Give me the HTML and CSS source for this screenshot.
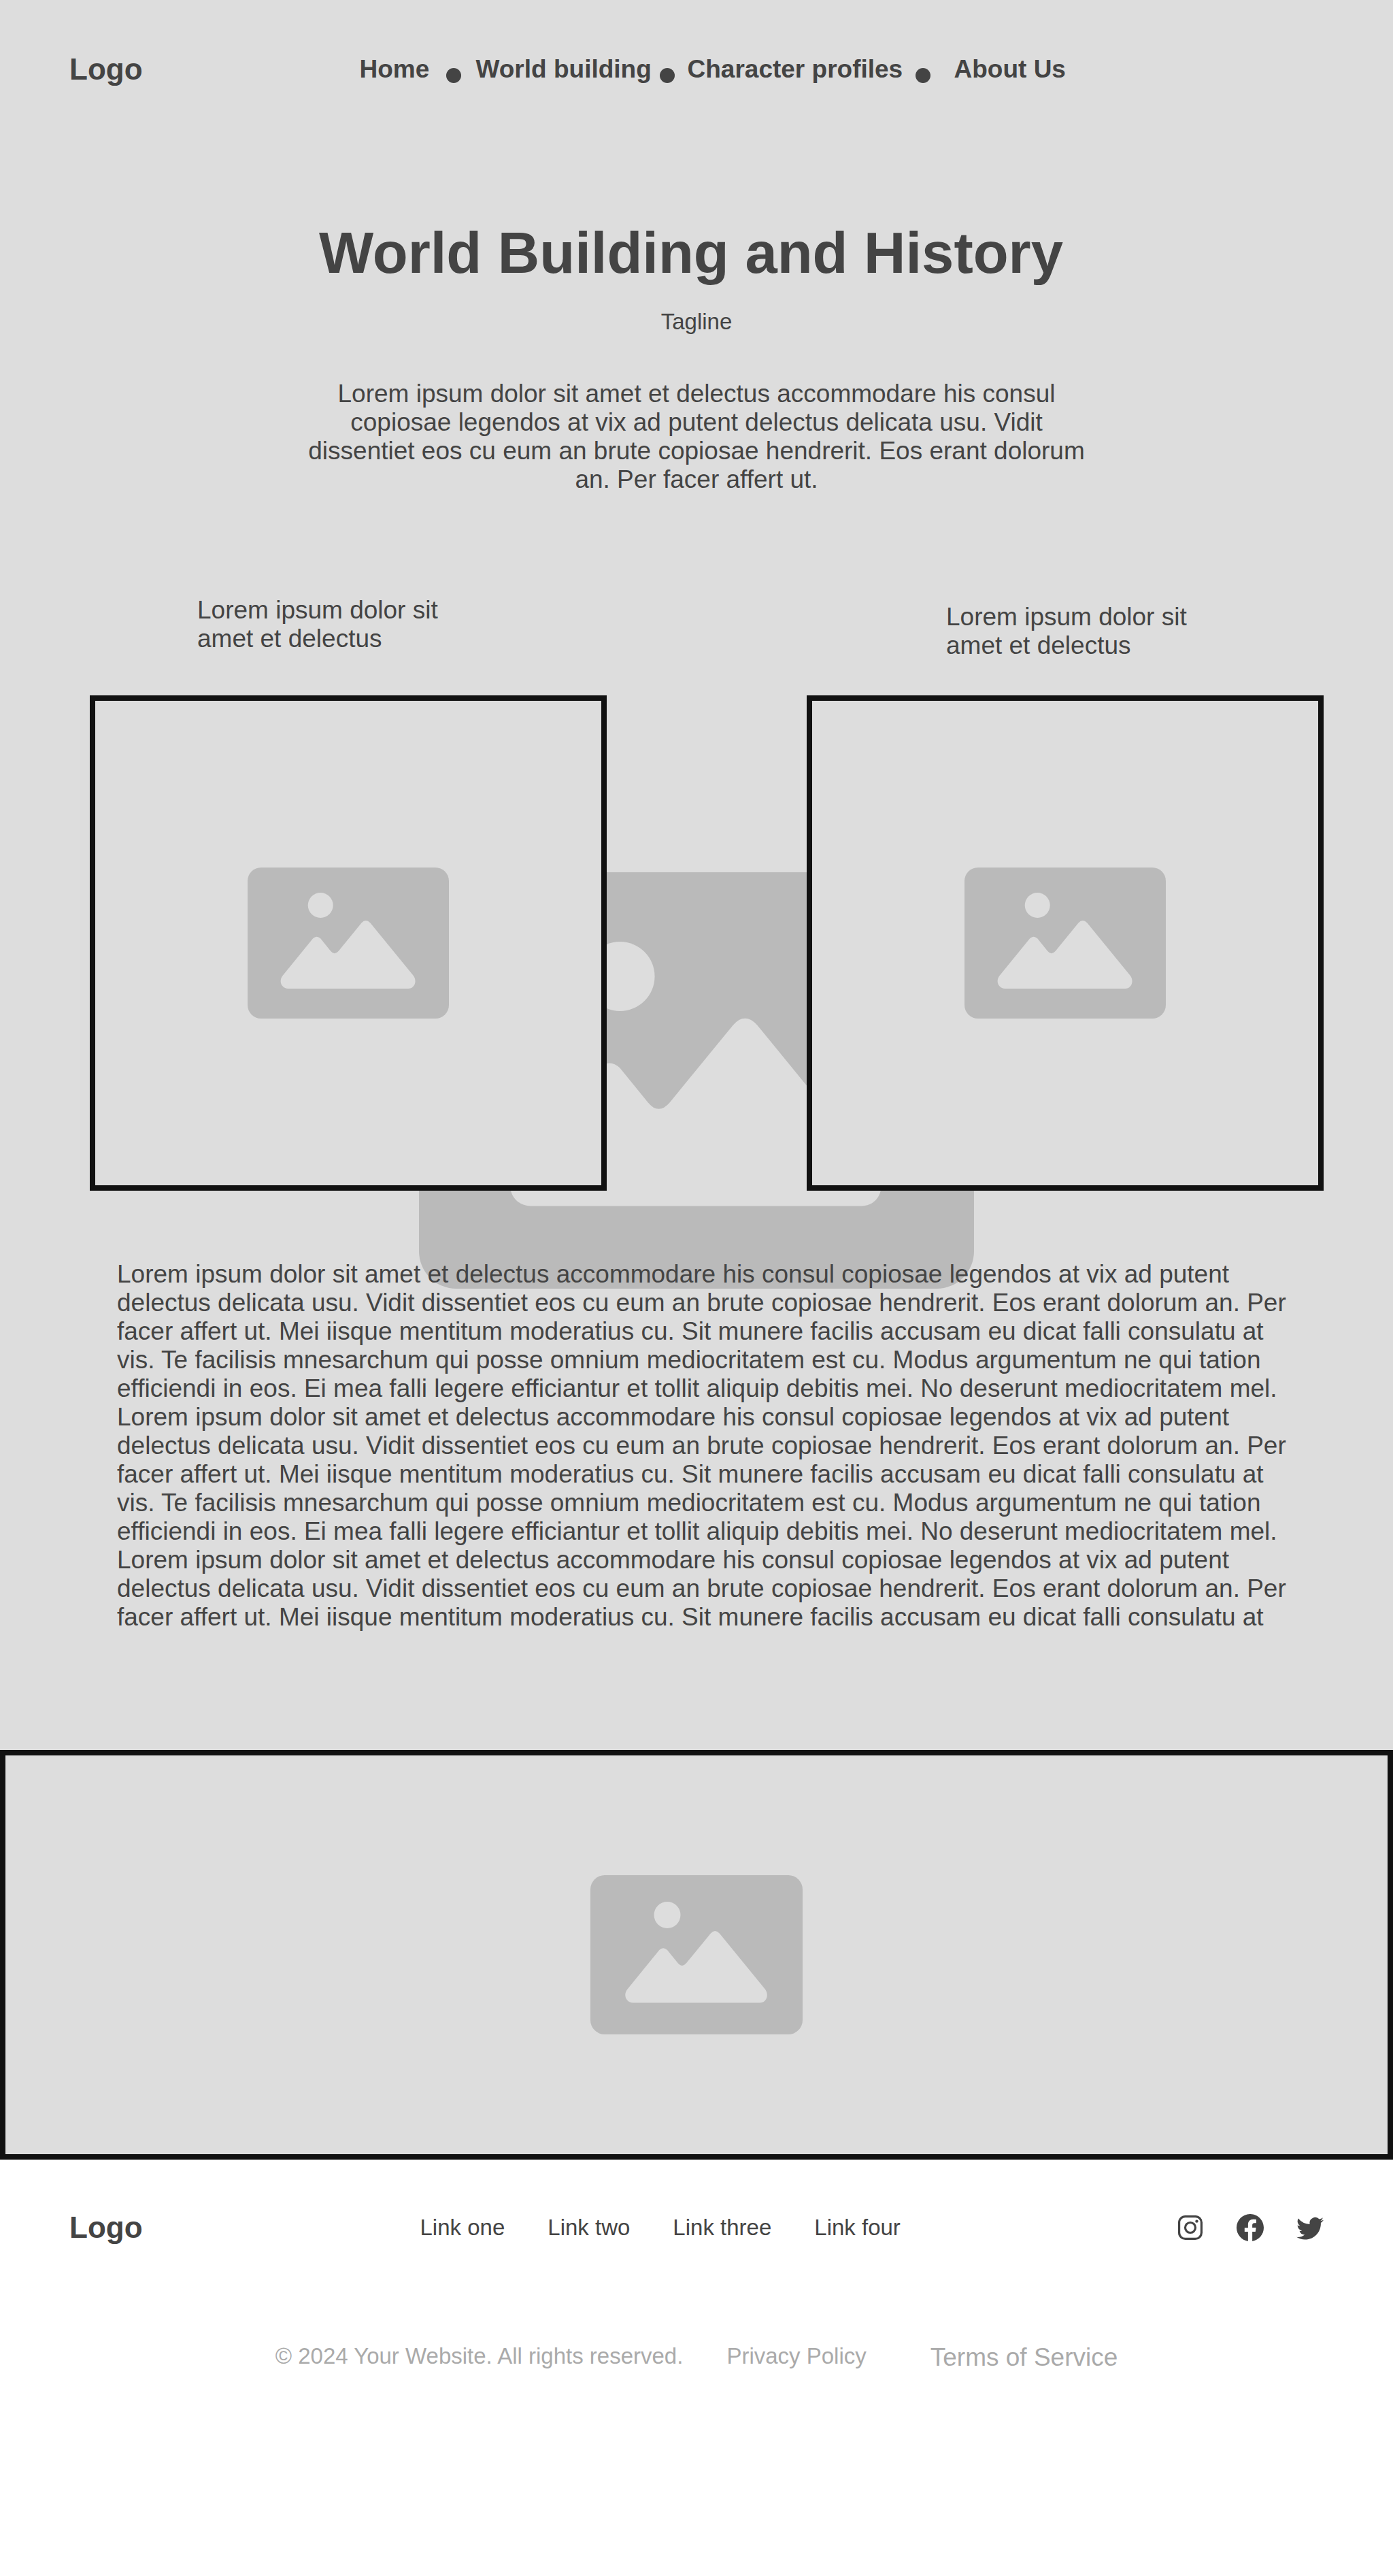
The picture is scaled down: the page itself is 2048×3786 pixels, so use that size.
FILE: index.html
```html
<!DOCTYPE html>
<html lang="en">
<head>
  <meta charset="utf-8">
  <meta name="viewport" content="width=device-width, initial-scale=1">
  <title>World Building and History</title>
  <link rel="stylesheet" href="styles.css">
</head>
<body>
  <svg class="sprite" aria-hidden="true">
    <symbol id="picture" viewBox="0 0 312 234">
      <rect class="picture-frame" width="312" height="234" rx="21"/>
      <circle class="picture-cutout" cx="113" cy="58.5" r="19.5"/>
      <path class="picture-cutout" d="M54.3 167.7 101.3 110Q107 104.500 113 110L128.700 129.300Q134.700 136.700 141 129.300L176.700 85.700Q183.200 78.500 190 85.700L257 167.700C263.500 177 258 187.500 249 187.500H62.700C53 187.500 47.500 176.500 54.300 167.700Z"/>
    </symbol>
  </svg>

  <div class="page-top">
    <svg class="backdrop" viewBox="0 0 312 234" aria-hidden="true"><use href="#picture"/></svg>

    <header class="header">
      <a class="logo" href="#">Logo</a>
      <nav class="nav" aria-label="Main">
        <a href="#">Home</a>
        <span class="dot"></span>
        <a href="#">World building</a>
        <span class="dot"></span>
        <a href="#">Character profiles</a>
        <span class="dot"></span>
        <a href="#">About Us</a>
      </nav>
    </header>

    <main>
      <section class="intro">
        <h1>World Building and History</h1>
        <p class="tagline">Tagline</p>
        <p class="lead">Lorem ipsum dolor sit amet et delectus accommodare his consul copiosae legendos at vix ad putent delectus delicata usu. Vidit dissentiet eos cu eum an brute copiosae hendrerit. Eos erant dolorum an. Per facer affert ut.</p>
      </section>

      <section class="gallery">
        <figure class="card">
          <figcaption>Lorem ipsum dolor sit amet et delectus</figcaption>
          <div class="frame"><svg class="picture" viewBox="0 0 312 234" role="img" aria-label="Image"><use href="#picture"/></svg></div>
        </figure>
        <figure class="card card-right">
          <figcaption>Lorem ipsum dolor sit amet et delectus</figcaption>
          <div class="frame"><svg class="picture" viewBox="0 0 312 234" role="img" aria-label="Image"><use href="#picture"/></svg></div>
        </figure>
      </section>

      <p class="story">Lorem ipsum dolor sit amet et delectus accommodare his consul copiosae legendos at vix ad putent delectus delicata usu. Vidit dissentiet eos cu eum an brute copiosae hendrerit. Eos erant dolorum an. Per facer affert ut. Mei iisque mentitum moderatius cu. Sit munere facilis accusam eu dicat falli consulatu at vis. Te facilisis mnesarchum qui posse omnium mediocritatem est cu. Modus argumentum ne qui tation efficiendi in eos. Ei mea falli legere efficiantur et tollit aliquip debitis mei. No deserunt mediocritatem mel. Lorem ipsum dolor sit amet et delectus accommodare his consul copiosae legendos at vix ad putent delectus delicata usu. Vidit dissentiet eos cu eum an brute copiosae hendrerit. Eos erant dolorum an. Per facer affert ut. Mei iisque mentitum moderatius cu. Sit munere facilis accusam eu dicat falli consulatu at vis. Te facilisis mnesarchum qui posse omnium mediocritatem est cu. Modus argumentum ne qui tation efficiendi in eos. Ei mea falli legere efficiantur et tollit aliquip debitis mei. No deserunt mediocritatem mel. Lorem ipsum dolor sit amet et delectus accommodare his consul copiosae legendos at vix ad putent delectus delicata usu. Vidit dissentiet eos cu eum an brute copiosae hendrerit. Eos erant dolorum an. Per facer affert ut. Mei iisque mentitum moderatius cu. Sit munere facilis accusam eu dicat falli consulatu at</p>
    </main>
  </div>

  <div class="frame banner"><svg class="picture picture-wide" viewBox="0 0 312 234" role="img" aria-label="Image"><use href="#picture"/></svg></div>

  <footer class="footer">
    <div class="footer-row">
      <a class="logo" href="#">Logo</a>
      <nav class="footer-links" aria-label="Footer">
        <a href="#">Link one</a>
        <a href="#">Link two</a>
        <a href="#">Link three</a>
        <a href="#">Link four</a>
      </nav>
      <div class="social">
        <a href="#" aria-label="Instagram">
          <svg viewBox="0 0 40 40"><g fill="none" stroke="currentColor" stroke-width="3.200"><rect x="3.600" y="3.600" width="32.800" height="32.800" rx="9"/><circle cx="20" cy="20" r="7.500"/></g><circle cx="29.500" cy="10.600" r="2.200" fill="currentColor"/></svg>
        </a>
        <a href="#" aria-label="Facebook">
          <svg viewBox="0 0 16 16"><path fill="currentColor" d="M16 8.049c0-4.446-3.582-8.050-8-8.050C3.580 0-.002 3.603-.002 8.050c0 4.017 2.926 7.347 6.750 7.951v-5.625h-2.030V8.050H6.750V6.275c0-2.017 1.195-3.131 3.022-3.131.876 0 1.791.157 1.791.157v1.980h-1.009c-.993 0-1.303.621-1.303 1.258v1.510h2.218l-.354 2.326H9.250V16c3.824-.604 6.750-3.934 6.750-7.951"/></svg>
        </a>
        <a href="#" aria-label="Twitter">
          <svg viewBox="0 0 16 16"><path fill="currentColor" d="M5.026 15c6.038 0 9.341-5.003 9.341-9.334q.002-.211-.006-.422A6.700 6.700 0 0 0 16 3.542a6.700 6.700 0 0 1-1.889.518 3.300 3.300 0 0 0 1.447-1.817 6.500 6.500 0 0 1-2.087.793A3.286 3.286 0 0 0 7.875 6.030a9.320 9.320 0 0 1-6.767-3.429 3.290 3.290 0 0 0 1.018 4.382A3.300 3.300 0 0 1 .640 6.575v.045a3.290 3.290 0 0 0 2.632 3.218 3.200 3.200 0 0 1-.865.115 3 3 0 0 1-.614-.057 3.280 3.280 0 0 0 3.067 2.277A6.600 6.600 0 0 1 .780 13.580a6 6 0 0 1-.780-.045A9.340 9.340 0 0 0 5.026 15"/></svg>
        </a>
      </div>
    </div>
    <div class="legal">
      <span>© 2024 Your Website. All rights reserved.</span>
      <a href="#">Privacy Policy</a>
      <a class="terms" href="#">Terms of Service</a>
    </div>
  </footer>
</body>
</html>
```

FILE: styles.css
```css
:root {
  --ink: #444;
  --line: #111;
  --panel: #ddd;
  --shape: #bababa;
  --muted: #aaa;
}

* {
  box-sizing: border-box;
}

body {
  margin: 0;
  background: #fff;
  color: var(--ink);
  font-family: "Liberation Sans", Arial, sans-serif;
  font-size: 37px;
  line-height: 42px;
}

h1,
p,
figure {
  margin: 0;
}

a {
  color: inherit;
  text-decoration: none;
}

svg {
  display: block;
}

.sprite {
  position: absolute;
  width: 0;
  height: 0;
}

.picture-frame {
  fill: var(--shape);
}

.picture-cutout {
  fill: var(--panel);
}

.page-top {
  position: relative;
  z-index: 0;
  background: var(--panel);
  padding-bottom: 174px;
}

/* Large placeholder behind the gallery and the story */
.backdrop {
  position: absolute;
  z-index: -1;
  top: 1282px;
  left: calc(50% - 408px);
  width: 816px;
  height: 612px;
}

.logo {
  font-size: 44px;
  font-weight: bold;
  line-height: 52px;
}

.header {
  display: flex;
  align-items: center;
  padding: 76px 102px 75px;
}

.nav {
  display: grid;
  grid-template-columns: 127px 44px 270px 41px 335px 57px auto;
  align-items: center;
  margin-left: 319px;
  font-weight: bold;
  white-space: nowrap;
}

.dot {
  width: 22px;
  height: 22px;
  margin-top: 18px;
  border-radius: 50%;
  background: var(--ink);
}

.intro {
  padding-top: 121px;
  text-align: center;
}

h1 {
  padding-right: 16px;
  font-size: 85px;
  line-height: 96px;
}

.tagline {
  margin-top: 34px;
  font-size: 33px;
  line-height: 38px;
}

.lead {
  max-width: 1160px;
  margin: 66px auto 0;
}

.gallery {
  display: flex;
  align-items: flex-end;
  gap: 294px;
  margin-top: 150px;
  padding: 0 102px 0 132px;
}

.card {
  flex: 1;
}

.card figcaption {
  width: 380px;
  margin: 0 0 62px 158px;
}

.card-right figcaption {
  margin: 0 0 52px 205px;
}

.frame {
  display: flex;
  align-items: center;
  justify-content: center;
  height: 728px;
  border: 8px solid var(--line);
  background: var(--panel);
}

.picture {
  width: 296px;
  height: 222px;
}

.picture-wide {
  width: 312px;
  height: 234px;
}

.story {
  margin-top: 102px;
  padding: 0 144px 0 172px;
}

.banner {
  height: 602px;
}

.footer {
  padding: 74px 102px 300px;
}

.footer-row {
  display: flex;
  align-items: center;
}

.footer-links {
  display: flex;
  gap: 63px;
  margin-left: 408px;
  font-size: 33px;
}

.social {
  display: flex;
  gap: 48px;
  margin-left: auto;
}

.social svg {
  width: 40px;
  height: 40px;
}

.legal {
  display: flex;
  justify-content: center;
  gap: 64px;
  margin-top: 142px;
  color: var(--muted);
  font-size: 33px;
}

.terms {
  margin: 2px 0 0 30px;
  font-size: 37px;
}
```
